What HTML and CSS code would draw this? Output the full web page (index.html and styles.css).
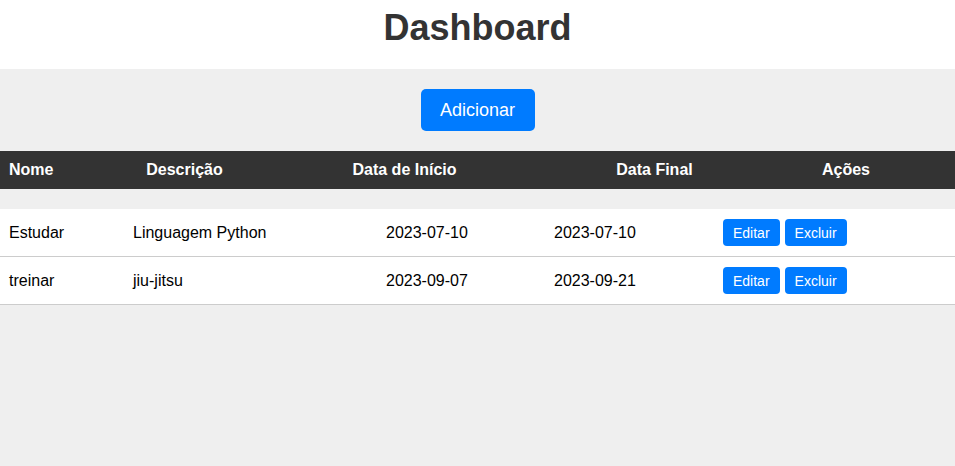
FILE: index.html
```html
<!DOCTYPE html>
<html lang="pt">
<head>
<meta charset="utf-8">
<title>Dashboard</title>
<link rel="stylesheet" href="styles.css">
</head>
<body>
<header class="top">
  <h1 class="title">Dashboard</h1>
</header>
<main class="content">
  <div class="actions-bar">
    <button class="btn btn-add">Adicionar</button>
  </div>
  <div class="thead">
    <div class="th th-nome">Nome</div>
    <div class="th th-desc">Descrição</div>
    <div class="th th-ini">Data de Início</div>
    <div class="th th-fim">Data Final</div>
    <div class="th th-acoes">Ações</div>
  </div>
  <div class="tbody">
    <div class="row">
      <div class="td">Estudar</div>
      <div class="td">Linguagem Python</div>
      <div class="td td-date">2023-07-10</div>
      <div class="td td-date">2023-07-10</div>
      <div class="td td-btns"><button class="btn btn-sm">Editar</button><button class="btn btn-sm">Excluir</button></div>
    </div>
    <div class="row">
      <div class="td">treinar</div>
      <div class="td">jiu-jitsu</div>
      <div class="td td-date">2023-09-07</div>
      <div class="td td-date">2023-09-21</div>
      <div class="td td-btns"><button class="btn btn-sm">Editar</button><button class="btn btn-sm">Excluir</button></div>
    </div>
  </div>
</main>
</body>
</html>
```
FILE: styles.css
```css
* { box-sizing: border-box; }
html, body {
  margin: 0;
  padding: 0;
  height: 100%;
}
body {
  font-family: "Liberation Sans", Arial, sans-serif;
  background: #efefef;
  color: #000;
  display: flex;
  flex-direction: column;
}
.top {
  background: #fff;
  height: 69px;
  padding-top: 7px;
  text-align: center;
}
.title {
  margin: 0;
  font-size: 36px;
  font-weight: bold;
  color: #333;
  line-height: normal;
}
.content {
  flex: 1;
  padding-top: 20px;
}
.actions-bar {
  display: flex;
  justify-content: center;
  margin-bottom: 20px;
}
.btn {
  font-family: "Liberation Sans", Arial, sans-serif;
  background: #007bff;
  color: #fff;
  border: none;
  cursor: pointer;
  padding: 0;
  display: inline-flex;
  align-items: center;
  justify-content: center;
}
.btn-add {
  width: 114px;
  height: 42px;
  font-size: 18px;
  border-radius: 5px;
}
.thead {
  background: #333;
  color: #fff;
  height: 38px;
  display: grid;
  grid-template-columns: 62px 245px 195px 305px 78px 1fr;
  align-items: center;
  margin-bottom: 20px;
}
.th {
  font-weight: bold;
  font-size: 16px;
  text-align: center;
  white-space: nowrap;
}
.th-nome { text-align: left; padding-left: 9px; }
.tbody {
  background: #fff;
}
.row {
  display: grid;
  grid-template-columns: 124px 253px 168px 169px 1fr;
  align-items: center;
  height: 48px;
  border-bottom: 1px solid #ccc;
}
.td {
  font-size: 16px;
  padding: 0 9px;
  white-space: nowrap;
}
.td-btns {
  display: flex;
  gap: 5px;
}
.btn-sm {
  height: 27px;
  padding: 0 10px;
  font-size: 14px;
  border-radius: 4px;
}
```
